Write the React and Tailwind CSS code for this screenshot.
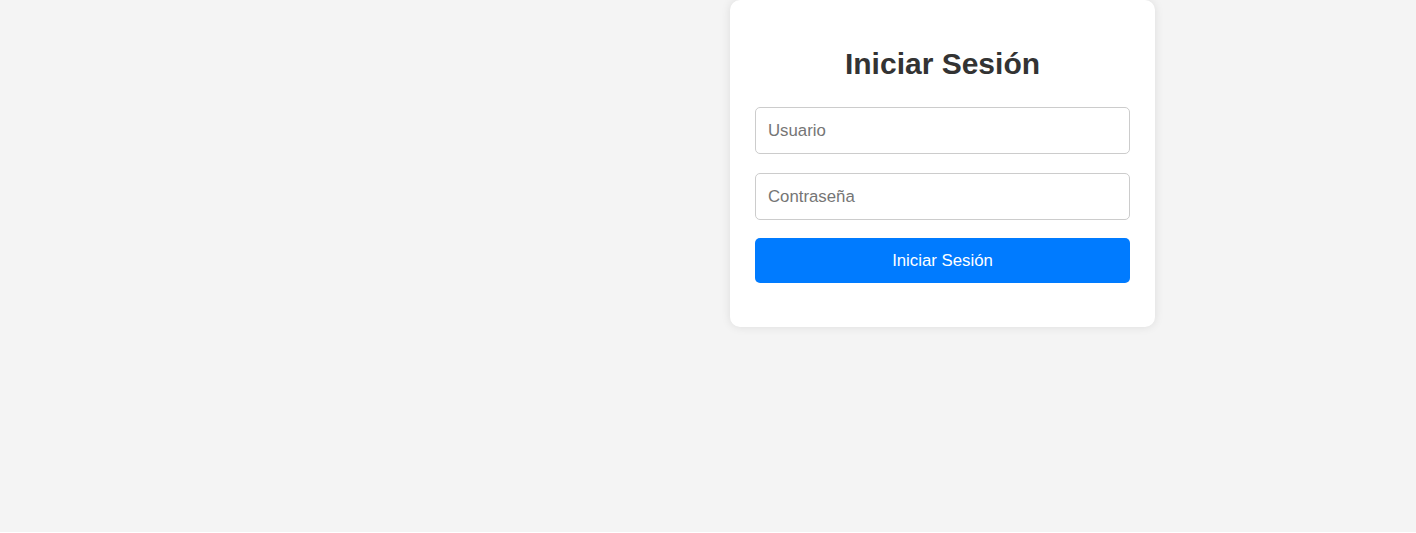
export default function App() {
  return (
    <div className="font-['Liberation_Sans',Arial,sans-serif]">
      <div className="h-[532px] bg-[#f4f4f4] flex items-start pl-[730px]">
        {/* LOGIN CARD */}
        <div className="w-[425px] h-[327px] bg-white rounded-[10px] shadow-[0_0_10px_rgba(0,0,0,0.1)] px-[25px] pt-[46px]">
          <h1 className="text-[30px] leading-[36px] font-bold text-[#333] text-center">
            Iniciar Sesión
          </h1>

          <form className="mt-[25px] flex flex-col" onSubmit={(e) => e.preventDefault()}>
            <input
              type="text"
              placeholder="Usuario"
              className="w-full h-[47px] px-[12px] border border-[#ccc] rounded-[5px] text-[16.8px] text-[#333] placeholder:text-[#757575] outline-none"
            />
            <input
              type="password"
              placeholder="Contraseña"
              className="mt-[19px] w-full h-[47px] px-[12px] border border-[#ccc] rounded-[5px] text-[16.8px] text-[#333] placeholder:text-[#757575] outline-none"
            />
            <button
              type="submit"
              className="mt-[18px] w-full h-[45px] bg-[#007bff] text-white text-[16.8px] rounded-[5px]"
            >
              Iniciar Sesión
            </button>
          </form>
        </div>
      </div>
    </div>
  );
}
